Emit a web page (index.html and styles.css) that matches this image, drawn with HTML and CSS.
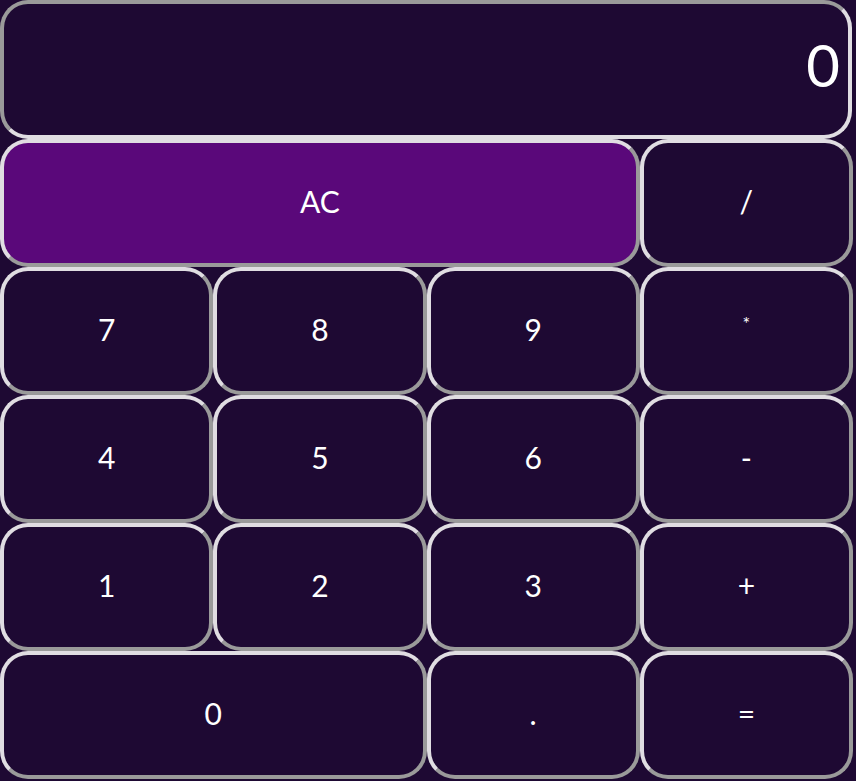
FILE: index.html
```html
<!DOCTYPE html>
<html>
<head>
<meta charset="utf-8">
<link rel="stylesheet" href="styles.css">
</head>
<body>
<div class="calc">
  <div class="display">0</div>
  <div class="keys">
    <button class="key ac span3">AC</button>
    <button class="key">/</button>
    <button class="key">7</button>
    <button class="key">8</button>
    <button class="key">9</button>
    <button class="key op-small">*</button>
    <button class="key">4</button>
    <button class="key">5</button>
    <button class="key">6</button>
    <button class="key">-</button>
    <button class="key">1</button>
    <button class="key">2</button>
    <button class="key">3</button>
    <button class="key">+</button>
    <button class="key span2">0</button>
    <button class="key">.</button>
    <button class="key">=</button>
  </div>
</div>
</body>
</html>
```
FILE: styles.css
```css
html, body {
  margin: 0;
  padding: 0;
  background: #1e0933;
  height: 100%;
}
.calc {
  width: 853px;
  font-family: "Lato", "DejaVu Sans", sans-serif;
  color: #ffffff;
}
.display {
  box-sizing: border-box;
  height: 139px;
  width: 852px;
  border: 4px solid;
  border-color: #9a9a9a #e0dde2 #e0dde2 #9a9a9a;
  border-radius: 28px;
  background: #1e0933;
  display: flex;
  align-items: center;
  justify-content: flex-end;
  padding-right: 8px;
  padding-bottom: 10px;
  font-size: 58px;
  font-weight: 400;
  line-height: 1;
}
.keys {
  display: grid;
  grid-template-columns: repeat(4, 1fr);
  grid-auto-rows: 128px;
}
.key {
  box-sizing: border-box;
  margin: 0;
  border: 4px solid;
  border-color: #e0dde2 #9a9a9a #9a9a9a #e0dde2;
  border-radius: 28px;
  background: #1e0933;
  color: #ffffff;
  font-family: "Lato", "DejaVu Sans", sans-serif;
  font-size: 30px;
  font-weight: 400;
  padding: 0 0 5px 0;
}
.op-small {
  font-size: 18px;
  padding-bottom: 16px;
}
.ac {
  background: #5a087a;
}
.span3 { grid-column: span 3; }
.span2 { grid-column: span 2; }
```
